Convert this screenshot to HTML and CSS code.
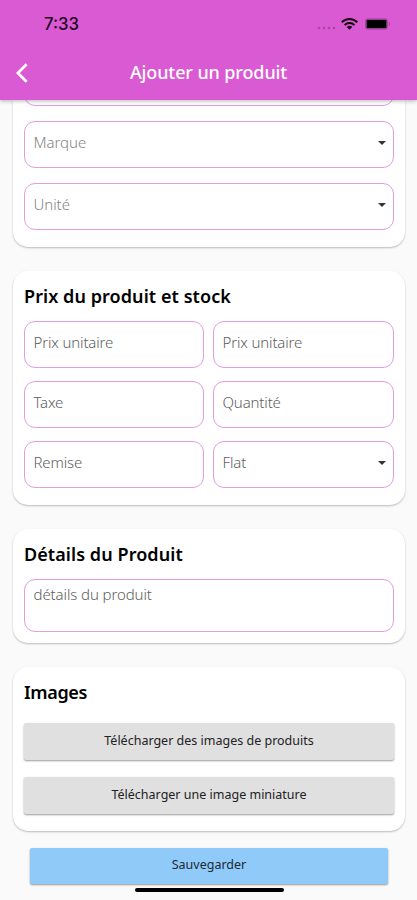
FILE: index.html
```html
<!DOCTYPE html>
<html lang="fr">
<head>
<meta charset="utf-8">
<meta name="viewport" content="width=device-width, initial-scale=1">
<title>Ajouter un produit</title>
<link rel="stylesheet" href="styles.css">
</head>
<body>
<div class="screen">
  <header class="header">
    <div class="status">
      <span class="time">7:33</span>
      <svg class="status-icons" width="76" height="16" viewBox="0 0 76 16">
        <g fill="#a845a3"><circle cx="4" cy="12" r="1.300"/><circle cx="9" cy="12" r="1.300"/><circle cx="14" cy="12" r="1.300"/><circle cx="19" cy="12" r="1.300"/></g>
        <g fill="none" stroke="#16040f" stroke-width="2"><path d="M26.800 6.200a10.800 10.800 0 0 1 15.400 0"/><path d="M29.600 9.100a7 7 0 0 1 9.800 0"/></g>
        <path d="M31.800 11a4 4 0 0 1 5.400 0L34.500 13.800z" fill="#16040f"/>
        <rect x="50.500" y="2.800" width="22" height="10.400" rx="2" fill="none" stroke="#a845a3"/>
        <rect x="51.500" y="3.800" width="20" height="8.400" rx=".8" fill="#000"/>
        <path d="M74 6q2 2 0 4z" fill="#8c3a87"/>
      </svg>
    </div>
    <div class="navbar">
      <svg class="back" width="14" height="20" viewBox="0 0 14 20"><path d="M11.600 1.200L2.900 10l8.700 8.800" fill="none" stroke="#fff" stroke-width="2.700"/></svg>
      <h1 class="title">Ajouter un produit</h1>
    </div>
  </header>
  <main class="content">
    <section class="card card-first">
      <div class="field"></div>
      <div class="field hint"><span>Marque</span><i class="caret"></i></div>
      <div class="field hint"><span>Unité</span><i class="caret"></i></div>
    </section>
    <section class="card card-price">
      <h2>Prix du produit et stock</h2>
      <div class="grid">
        <div class="field"><span>Prix unitaire</span></div>
        <div class="field"><span>Prix unitaire</span></div>
        <div class="field"><span>Taxe</span></div>
        <div class="field"><span>Quantité</span></div>
        <div class="field"><span>Remise</span></div>
        <div class="field"><span>Flat</span><i class="caret"></i></div>
      </div>
    </section>
    <section class="card card-details">
      <h2>Détails du Produit</h2>
      <div class="field area"><span>détails du produit</span></div>
    </section>
    <section class="card card-images">
      <h2>Images</h2>
      <div class="button">Télécharger des images de produits</div>
      <div class="button">Télécharger une image miniature</div>
    </section>
    <div class="button save">Sauvegarder</div>
    <div class="home"></div>
  </main>
</div>
</body>
</html>
```
FILE: styles.css
```css
* { box-sizing: border-box; }
body { margin: 0; font-family: "Noto Sans", sans-serif; background: #fafafa; }
.screen { width: 417px; height: 900px; overflow: hidden; display: flex; flex-direction: column; }
.header { flex: none; height: 100px; background: #d95ad2; box-shadow: 0 1px 4px rgba(0,0,0,.3); z-index: 1; }
.status { height: 48px; padding: 0 26px 0 44px; display: flex; align-items: center; justify-content: space-between; }
.time { font: 500 16.700px/20px Inter, sans-serif; color: #210820; }
.navbar { height: 48px; display: grid; grid-template-columns: 40px 1fr 40px; align-items: center; }
.back { margin-left: 15px; margin-top: 2px; }
.title { margin: 0; text-align: center; color: #fff; font-size: 18px; font-weight: 500; line-height: 24px; letter-spacing: -.12px; }
.content { flex: 1; min-height: 0; display: flex; flex-direction: column; padding: 0 12px 0 13px; gap: 24px; }
.card { flex: none; background: #fff; border-radius: 15px; box-shadow: 0 1px 2px rgba(0,0,0,.26); padding: 0 11px; }
.card-first { height: 147px; display: flex; flex-direction: column; justify-content: flex-end; gap: 15px; padding-bottom: 17.500px; border-radius: 0 0 15px 15px; }
.field { flex: none; height: 47px; border: 1px solid #e39ddf; border-radius: 11px; padding: 0 7px 5px 8.500px; display: flex; align-items: center; justify-content: space-between; color: #606060; font-size: 15px; font-weight: 300; line-height: 20px; letter-spacing: -.15px; background: #fff; }
.hint { color: #858585; letter-spacing: -.05px; padding-bottom: 4px; }
.caret { border: 4px solid transparent; border-top-color: #333; border-bottom: 0; margin: 1px 0 0; }
.card h2 { margin: 0; color: #000; font-size: 18px; font-weight: 600; line-height: 26px; letter-spacing: .07px; }
.card-price { height: 234px; padding-top: 12px; }
.grid { display: grid; grid-template-columns: 180px 181px; column-gap: 9px; row-gap: 13.200px; margin-top: 12px; }
.card-details { height: 114px; padding-top: 12px; }
.area { height: 53px; margin-top: 12px; align-items: flex-start; padding-top: 4px; letter-spacing: -.1px; }
.card-images { height: 164px; padding-top: 12px; }
.card-images h2 { letter-spacing: -.35px; }
.button { height: 37px; display: flex; align-items: center; justify-content: center; background: #e0e0e0; border-radius: 2px; box-shadow: 0 1px 2px rgba(0,0,0,.4); color: #222; font-size: 12.500px; line-height: 18px; padding-bottom: 1px; }
.card-images .button { margin-top: 17px; }
.card-images h2 + .button { margin-top: 18px; }
.save { flex: none; background: #90caf9; margin: -7px 17px 0; height: 36px; color: #1b2b38; padding-bottom: 2px; }
.home { flex: none; align-self: center; width: 149px; height: 4px; border-radius: 2px; background: #000; margin-top: -20px; }
```
